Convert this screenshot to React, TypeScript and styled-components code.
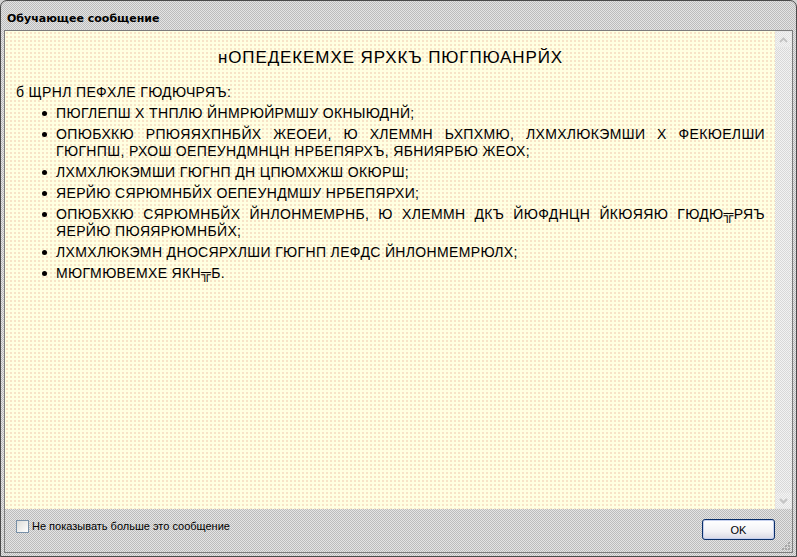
import React from "react";
import styled, { createGlobalStyle } from "styled-components";

const GlobalStyle = createGlobalStyle`
  html, body {
    margin: 0;
    padding: 0;
    background: #d2d2d2;
  }
  #root {
    width: 797px;
    height: 557px;
  }
`;

const dither = (a: string, b: string) =>
  `repeating-conic-gradient(${a} 0 25%, ${b} 0 50%) 0 0 / 2px 2px`;

const Window = styled.div`
  box-sizing: border-box;
  width: 797px;
  height: 557px;
  display: flex;
  flex-direction: column;
  border: 1px solid #4a4a4a;
  border-radius: 7px 7px 0 0;
  padding: 0 3px 3px;
  background: ${dither("#e4e4e4", "#bcbcbc")};
  overflow: hidden;
`;

const TitleBar = styled.div`
  flex: none;
  height: 29px;
  box-sizing: border-box;
  padding: 11px 0 0 3px;
  font: bold 11px/14px "DejaVu Sans", sans-serif;
  color: #000;
`;

const Panel = styled.div`
  flex: 1;
  min-height: 0;
  display: flex;
  flex-direction: column;
  border: 1px solid #7c7c7c;
`;

const Body = styled.div`
  flex: 1;
  min-height: 0;
  display: flex;
`;

const Message = styled.div`
  flex: 1;
  padding: 17px 10px 0 11px;
  background-color: #ffffe1;
  background-image: radial-gradient(circle, #f7e2c6 0.7px, transparent 0.9px);
  background-size: 4px 4px;
  font-family: "Liberation Sans", "DejaVu Sans", Arial, sans-serif;
  color: #000;
`;

const Heading = styled.h1`
  margin: 0;
  font-size: 17px;
  font-weight: normal;
  line-height: 20px;
  letter-spacing: 0.9px;
  text-align: center;
`;

const Intro = styled.p`
  margin: 16px 0 0;
  font-size: 14px;
  line-height: 17px;
  letter-spacing: 0.35px;
`;

const List = styled.ul`
  margin: 4px 0 0;
  padding: 0 0 0 40px;
  list-style: none;
`;

const Item = styled.li`
  position: relative;
  margin-top: 4px;
  font-size: 14px;
  line-height: 17px;
  letter-spacing: 0.35px;
  text-align: justify;

  &::before {
    content: "";
    position: absolute;
    left: -14px;
    top: 6px;
    width: 5px;
    height: 5px;
    border-radius: 50%;
    background: #000;
  }
`;

const ScrollBar = styled.div`
  flex: none;
  width: 17px;
  display: flex;
  flex-direction: column;
  justify-content: space-between;
  background: ${dither("#f2f2f2", "#d8d8d8")};
`;

const ArrowButton = styled.div`
  height: 17px;
  display: flex;
  align-items: center;
  justify-content: center;
  box-sizing: border-box;
  border: 1px solid #e6e6e6;
  background: ${dither("#f4f4f4", "#e0e0e0")};
`;

const Footer = styled.div`
  position: relative;
  flex: none;
  height: 43px;
  box-sizing: border-box;
  display: flex;
  justify-content: space-between;
  align-items: flex-start;
  padding: 10px 17px 0 11px;
`;

const CheckRow = styled.label`
  display: flex;
  align-items: center;
  gap: 3px;
  margin-top: 1px;
  font: 11px/13px "Liberation Sans", Arial, sans-serif;
  color: #000;
`;

const CheckBox = styled.span`
  width: 13px;
  height: 13px;
  box-sizing: border-box;
  border: 1px solid #7890a8;
  background: linear-gradient(135deg, #dcdcd8, #ffffff);
`;

const OkButton = styled.button`
  width: 73px;
  height: 21px;
  padding: 0;
  border: 1px solid #0a2f6a;
  border-radius: 3px;
  background: linear-gradient(#ffffff, #f2f2f6 60%, #d8d8e4);
  box-shadow: inset 0 0 0 1px #c6d0ee;
  font: 11px "Liberation Sans", Arial, sans-serif;
  color: #000;
`;

const Grip = styled.svg`
  position: absolute;
  right: 1px;
  bottom: 1px;
`;

function Chevron({ up }: { up?: boolean }) {
  return (
    <svg width="9" height="6" viewBox="0 0 9 6">
      <path
        d={up ? "M1 5 L4.5 1.5 L8 5" : "M1 1 L4.5 4.5 L8 1"}
        fill="none"
        stroke="#c4c4c4"
        strokeWidth="2"
      />
    </svg>
  );
}

const items = [
  "ПЮГЛЕПШ Х ТНПЛЮ ЙНМРЮЙРМШУ ОКНЫЮДНЙ;",
  "ОПЮБХКЮ РПЮЯЯХПНБЙХ ЖЕОЕИ, Ю ХЛЕММН ЬХПХМЮ, ЛХМХЛЮКЭМШИ Х ФЕКЮЕЛШИ ГЮГНПШ, РХОШ ОЕПЕУНДМНЦН НРБЕПЯРХЪ, ЯБНИЯРБЮ ЖЕОХ;",
  "ЛХМХЛЮКЭМШИ ГЮГНП ДН ЦПЮМХЖШ ОКЮРШ;",
  "ЯЕРЙЮ СЯРЮМНБЙХ ОЕПЕУНДМШУ НРБЕПЯРХИ;",
  "ОПЮБХКЮ СЯРЮМНБЙХ ЙНЛОНМЕМРНБ, Ю ХЛЕММН ДКЪ ЙЮФДНЦН ЙКЮЯЯЮ ГЮДЮ╦РЯЪ ЯЕРЙЮ ПЮЯЯРЮМНБЙХ;",
  "ЛХМХЛЮКЭМН ДНОСЯРХЛШИ ГЮГНП ЛЕФДС ЙНЛОНМЕМРЮЛХ;",
  "МЮГМЮВЕМХЕ ЯКН╦Б.",
];

export default function App() {
  return (
    <>
      <GlobalStyle />
      <Window>
        <TitleBar>Обучающее сообщение</TitleBar>
        <Panel>
          <Body>
            <Message>
              <Heading>нОПЕДЕКЕМХЕ ЯРХКЪ ПЮГПЮАНРЙХ</Heading>
              <Intro>б ЩРНЛ ПЕФХЛЕ ГЮДЮЧРЯЪ:</Intro>
              <List>
                {items.map((text) => (
                  <Item key={text}>{text}</Item>
                ))}
              </List>
            </Message>
            <ScrollBar>
              <ArrowButton>
                <Chevron up />
              </ArrowButton>
              <ArrowButton>
                <Chevron />
              </ArrowButton>
            </ScrollBar>
          </Body>
          <Footer>
            <CheckRow>
              <CheckBox />
              Не показывать больше это сообщение
            </CheckRow>
            <OkButton>OK</OkButton>
            <Grip width="10" height="10" viewBox="0 0 10 10">
              {[
                [8, 2],
                [5, 5],
                [8, 5],
                [2, 8],
                [5, 8],
                [8, 8],
              ].map(([x, y]) => (
                <rect key={`${x}-${y}`} x={x - 1} y={y - 1} width="2" height="2" fill="#a8a8a8" />
              ))}
            </Grip>
          </Footer>
        </Panel>
      </Window>
    </>
  );
}
